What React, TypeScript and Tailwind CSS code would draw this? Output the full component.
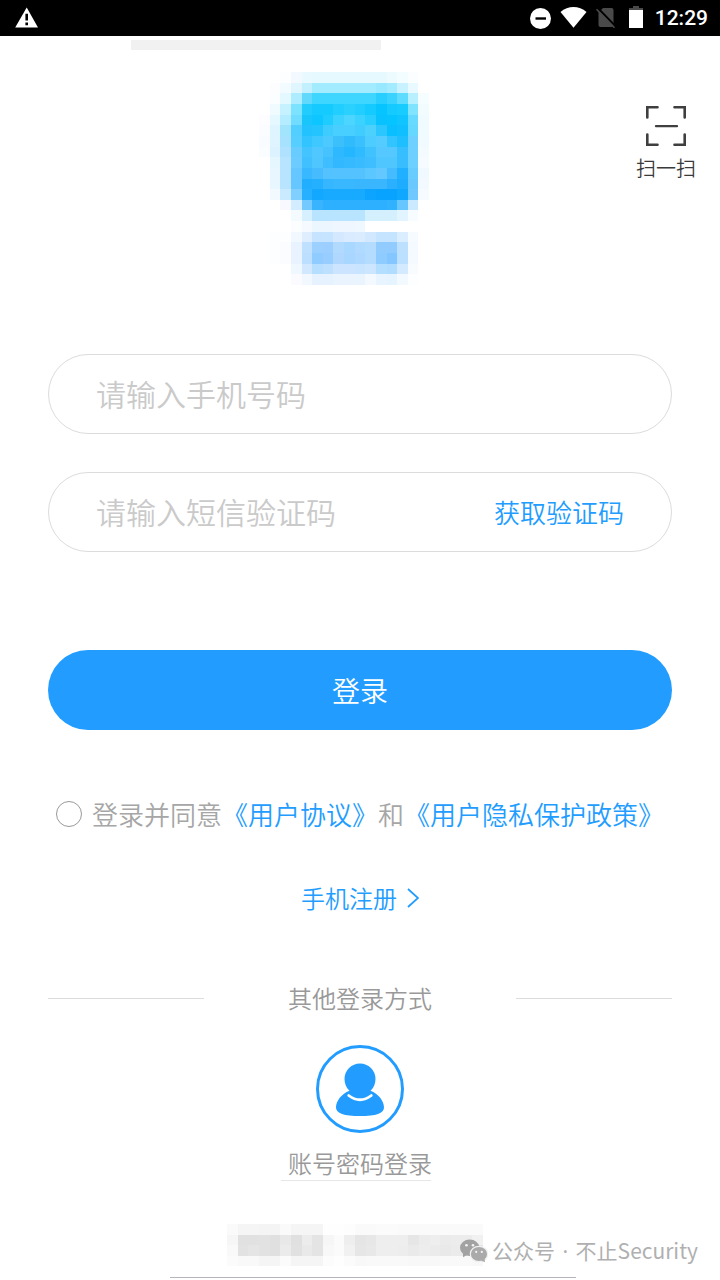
// one string per row, one colour per cell, "." leaves the cell empty
const LOGO = [
  ". . fdfeff f2faff e8f9ff e6f9fe e6f9fe e6f9fe e6f9fe e6f9fe e6f9fe e6f9fe edfbff f3fcff fbfeff .",
  ". fdfdff f2fbff e0f6ff c2f0ff a3ebff a3ebff a3ebff a3ebff a3ebff a3ebff 98e8ff a3ebff c8f2ff e8faff .",
  ". fbfeff e4f8ff aeecff 60d9fc 3ed6ff 3ed6ff 3ed6ff 3ed6ff 3ed6ff 3ed6ff 28ceff 3ad3ff 5edcff b8f0ff f6fdff",
  ". effbff c6f2ff 7ce3ff 22ccfc 14caff 14caff 22ceff 2ad1ff 22ceff 14caff 06c4ff 14caff 18ccff 80e4ff f2fcff",
  "fdfdff e6f8ff b6ecff 70dcff 18c6fc 0ec6ff 1eccff 3cd2ff 4cd6ff 3cd2ff 28ceff 08c2ff 06c4ff 10c4ff 68daff effbff",
  "fbfcff def4ff a2e4fc 52ceff 22c2fe 24c4fe 3eccff 48ceff 48ceff 40ccfc 4cd0fc 2cc6ff 0abfff 10bfff 66d8ff f0fbff",
  "f8fbff e0f4ff a6e2fe 56ceff 32c4ff 3ec8ff 4ccaff 3cc0fc 30bcfc 3ac0ff 4cccff 54ccff 32c4ff 1ebeff 6ed0ff f0faff",
  "fafdff dcf2ff b0e2ff 68ccff 44c4fe 50c8ff 46c2ff 2eb8ff 24b6ff 30baff 40c2ff 54c8ff 54c8ff 36beff 6ed0ff f4fbff",
  ". e6f6ff b8e4ff 6cccff 40c0ff 50c6ff 3ebeff 32b8ff 36baff 38bcff 3ebeff 50c6ff 50c6ff 38beff 6ed0ff f5fbff",
  ". e8f6ff b8e4ff 66c6ff 38b8ff 46bcff 54c2ff 54c2ff 54c2ff 54c2ff 5cc6ff 62c8ff 44bcff 20b0ff 68ccff f0f9ff",
  ". e8f6ff b8e4ff 66c6ff 22aeff 24b0ff 36b6ff 3ab8ff 3ab8ff 3ab6ff 3ab6ff 3ab6ff 2ab0ff 1eacff 6ac8ff f3faff",
  ". f2faff caeaff 80d0ff 26b0ff 12a8ff 18aaff 18aaff 18aaff 18aaff 0ca4ff 08a2ff 08a2ff 10a8ff 70c8ff f5fbff",
  ". . f8f9ff d4ecff 74caff 38b4ff 2cb0ff 2cb0ff 2cb0ff 2cb0ff 2cb0ff 2cb0ff 30b2ff 66c6ff cceaff .",
  ". . . f4fbff d6f0ff b8e4ff b8e4ff b8e4ff b8e4ff b8e4ff d4f0ff d4f0ff d4f0ff e2f4ff f6fcff .",
  ". . . fbfdff f4faff ecf6ff ecf6ff f0f6ff f0f6ff f0f8ff . . . . . .",
  ". fdfeff fcfeff f2f8ff deeefe c6e4ff c6e4ff d4e8ff daeaff dcecff d2e8ff c4e4ff c4e4ff daeeff f6fbff .",
  ". fdfeff fafcff e8f3ff c0e0ff 9cd0ff 9ccfff b2daff a8d8ff b0daff b4dcff 92ccff 92ccff bee0ff f4faff .",
  ". fdfeff fafcff e8f3ff bcdeff 90ccff 98ceff b0d8ff a8d6ff aed8ff b4dcff 8eccff 84c6ff bce0ff f4faff .",
  ". . . f0f8ff d2e8ff b6deff bee0ff cce4ff cce4ff c8e4ff cce6ff b4deff b0dcff d4ebff f8fcff .",
  ". . . fbfbff f2f8ff e6f2ff e6f2ff eaf4ff eaf4ff eaf4ff f4f8ff e8f4ff e6f4ff f2faff fcfeff .",
];

const FOOTER = [
  "fafafa f5f5f5 f5f5f5 f4f4f4 f4f4f4 fafafa f5f5f5 f5f5f5 f5f5f5 fefefe fefefe fdfdfd fafafa fafafa fbfbfb fbfbfb fafafa fafafa fafafa fafafa fafafa fafafa fafafa fafafa",
  "f6f6f6 e1e1e1 e1e1e1 e2e2e2 e0e0e0 e8e8e8 e0e0e0 ececec e4e4e4 f6f6f6 fbfbfb eeeeee e5e5e5 e7e7e7 eeeeee eeeeee eeeeee e6e6e6 ececec eeeeee ebebeb ececec ececec f1f1f1",
  "f9f9f9 e2e2e2 e5e5e5 e2e2e2 e0e0e0 ebebeb e1e1e1 e9e9e9 e4e4e4 f8f8f8 fbfbfb f1f1f1 e6e6e6 e8e8e8 eeeeee eeeeee ededed eaeaea ededed ebebeb e9e9e9 ebebeb e8e8e8 e6e6e6",
  "fbfbfb f9f9f9 f9f9f9 f5f5f5 f5f5f5 fbfbfb f5f5f5 f5f5f5 f5f5f5 fcfcfc fefefe fbfbfb f8f8f8 f9f9f9 f9f9f9 f9f9f9 f9f9f9 f8f8f8 f8f8f8 f8f8f8 f9f9f9 f9f9f9 f9f9f9 f8f8f8",
];

type MosaicProps = {
  rows: string[];
  cols: number;
  className: string;
};

function Mosaic({ rows, cols, className }: MosaicProps) {
  return (
    <svg
      className={className}
      viewBox={`0 0 ${cols} ${rows.length}`}
      preserveAspectRatio="none"
      shapeRendering="crispEdges"
      aria-hidden="true"
    >
      {rows.map((row, y) =>
        row.split(" ").map((color, x) =>
          color === "." ? null : (
            <rect key={`${x}-${y}`} x={x} y={y} width="1" height="1" fill={`#${color}`} />
          )
        )
      )}
    </svg>
  );
}

function StatusBar() {
  return (
    <div className="flex h-9 items-center justify-between bg-black pr-3 pl-3.5 text-white">
      <svg className="h-9 w-6" viewBox="0 0 24 36" fill="none">
        <path d="M12.7 7.5 24 27.5H1.2Z" fill="#fff" />
        <path d="M11.4 13.7h2.6v6.8h-2.6zM11.4 22.4h2.6v2.8h-2.6z" fill="#000" />
      </svg>

      <div className="flex items-center">
        <svg className="h-9 w-[120px]" viewBox="527 0 120 36" fill="none">
          <circle cx="540.5" cy="18.5" r="10.5" fill="#fff" />
          <path d="M535.5 18.5h10.5" stroke="#000" strokeWidth="2.4" />
          <path d="M560.5 12C568 5.4 579 5.4 586.5 12L573.5 27.7Z" fill="#fff" />
          <path d="M603 8h8.5q2 0 2 2v15q0 2-2 2H600.5q-2 0-2-2V12.5Z" fill="#4a4a4a" />
          <path d="M598 8.3 615.5 26.3" stroke="#000" strokeWidth="2" />
          <path d="M596.5 9.3 614.5 27.8" stroke="#4a4a4a" strokeWidth="1.6" />
          <path d="M633 6h6v2h4v3h-14v-3h4z" fill="#4a4a4a" />
          <path d="M629 10h14v18h-14z" fill="#fff" />
        </svg>
        <span className="ml-2 font-[Roboto,sans-serif] text-[21px] leading-9 font-medium">12:29</span>
      </div>
    </div>
  );
}

function ScanIcon() {
  return (
    <svg className="h-10 w-10" viewBox="0 0 40 40" fill="none" stroke="#3f3f3f" strokeWidth="2.6">
      <path d="M1.3 11.5V1.3H11.5M28.5 1.3H38.7V11.5M38.7 28.5V38.7H28.5M11.5 38.7H1.3V28.5" strokeLinecap="round" />
      <path d="M10 20.2H31" strokeWidth="2.3" strokeLinecap="round" />
    </svg>
  );
}

function AccountIcon() {
  return (
    <svg className="h-22 w-22" viewBox="0 0 88 88" fill="none">
      <circle cx="44" cy="44" r="42.5" stroke="#229dff" strokeWidth="3" />
      <path
        d="M28.5 34a15.5 15.5 0 0 1 31 0c0 5-2 9-5 11.8C62.5 49 68 56 68 62.5c0 6-8 8.5-24 8.5s-24-2.5-24-8.5C20 56 25.5 49 33.5 45.8C30.5 43 28.5 39 28.5 34Z"
        fill="#229dff"
      />
      <path d="M32.7 50.5Q44 59 55.3 50.5" stroke="#fff" strokeWidth="2.8" strokeLinecap="round" />
    </svg>
  );
}

function WeChatIcon() {
  return (
    <svg className="h-6 w-7" viewBox="0 0 28 24" aria-hidden="true">
      <path d="M3 14.500V18.200L7.500 15.800Z" fill="#a2a2a2" />
      <ellipse cx="9.700" cy="8.700" rx="9.700" ry="8.200" fill="#a2a2a2" />
      <circle cx="6.500" cy="6.200" r="1.300" fill="#f4f4f4" />
      <circle cx="13" cy="6.200" r="1.300" fill="#f4f4f4" />
      <ellipse cx="19" cy="15" rx="8.700" ry="7.700" fill="#aaa" stroke="#f0f0f0" strokeWidth="1.200" />
      <path d="M21 21.500 25 23.200 24.500 19.500Z" fill="#aaa" />
      <circle cx="16.200" cy="12.900" r="1.100" fill="#f4f4f4" />
      <circle cx="21.800" cy="12.900" r="1.100" fill="#f4f4f4" />
    </svg>
  );
}

export default function App() {
  return (
    <div className="min-h-screen bg-white font-['Noto_Sans_CJK_SC',sans-serif] font-[350]">
      <StatusBar />
      <div className="mt-1 ml-[131px] h-2.5 w-[250px] bg-[#f1f1f1]" />

      <main className="px-12">
        <header className="-mr-6 -ml-12 grid grid-cols-[1fr_auto_1fr] pt-[22px] pl-6">
          <Mosaic rows={LOGO} cols={19} className="col-start-2 h-[213px] w-[202px]" />
          <button type="button" className="mt-[34px] flex flex-col items-center gap-1.5 justify-self-end self-start text-xl leading-8 text-[#3a3a3a]">
            <ScanIcon />
            扫一扫
          </button>
        </header>

        <form className="mt-[69px]" onSubmit={(e) => e.preventDefault()}>
          <input
            type="tel"
            aria-label="请输入手机号码"
            placeholder="请输入手机号码"
            className="block h-20 w-full rounded-full border border-[#dcdcdc] px-[47px] pb-0.5 text-[30px] outline-none placeholder:text-[#cacaca]"
          />

          <div className="mt-[38px] flex h-20 items-center rounded-full border border-[#dcdcdc] px-[47px] pb-0.5">
            <input
              type="text"
              aria-label="请输入短信验证码"
              placeholder="请输入短信验证码"
              className="h-full min-w-0 flex-1 text-[30px] outline-none placeholder:text-[#cacaca]"
            />
            <button type="button" className="text-[26px] text-[#229dff]">
              获取验证码
            </button>
          </div>

          <button type="submit" className="mt-[98px] h-20 w-full rounded-full bg-[#229dff] text-[28px] text-white">
            登录
          </button>

          <div className="mt-16 flex items-center gap-2.5 pl-2 text-[26px] leading-10 whitespace-nowrap text-[#a6a6a6]">
            <input
              id="agree"
              type="checkbox"
              className="size-[26px] appearance-none rounded-full border border-[#999] checked:bg-[#229dff]"
            />
            <div>
              <label htmlFor="agree">登录并同意</label>
              <a href="#terms" className="text-[#229dff]">《用户协议》</a>
              和
              <a href="#privacy" className="text-[#229dff]">《用户隐私保护政策》</a>
            </div>
          </div>
        </form>

        <a href="#register" className="mt-[46px] flex items-center justify-center gap-2.5 text-2xl leading-9 text-[#229dff]">
          手机注册
          <svg className="h-5 w-3" viewBox="0 0 12 20" fill="none" stroke="#229dff" strokeWidth="1.8">
            <path d="M1 1 11 10 1 19" />
          </svg>
        </a>

        <div className="mt-16 grid grid-cols-[1fr_2fr_1fr] items-center text-center text-2xl leading-9 text-[#999]">
          <span className="h-px bg-[#dcdcdc]" />
          <h2 className="font-[350]">其他登录方式</h2>
          <span className="h-px bg-[#dcdcdc]" />
        </div>

        <div className="mt-[29px] flex flex-col items-center">
          <button type="button" className="flex flex-col items-center gap-3 text-2xl leading-9 text-[#999]">
            <AccountIcon />
            账号密码登录
          </button>
          <div className="-mt-px mr-2 h-px w-[150px] bg-[#e6e6e6]" />
        </div>
      </main>

      <footer className="relative mt-[43px]">
        <div className="flex pl-[227px]">
          <Mosaic rows={FOOTER} cols={24} className="h-[42px] w-64" />
        </div>
        <div className="mt-[11px] ml-[170px] h-px w-[406px] bg-[#b5b5bd]" />
        <p className="absolute top-2.5 right-[22px] flex items-center gap-1 text-[21px] leading-8 font-normal text-[#b0b0b0]">
          <WeChatIcon />
          <span>
            公众号<span className="px-0.5 font-['Noto_Sans',sans-serif]"> · </span>不止Security
          </span>
        </p>
      </footer>
    </div>
  );
}
